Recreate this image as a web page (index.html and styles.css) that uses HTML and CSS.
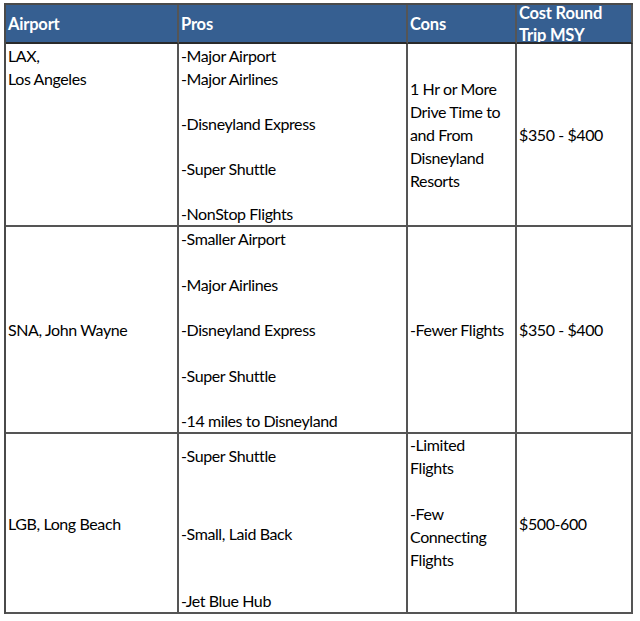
FILE: index.html
```html
<!DOCTYPE html>
<html>
<head>
<meta charset="utf-8">
<link rel="stylesheet" href="styles.css">
</head>
<body>
<div class="sheet">
  <div class="cell head">Airport</div>
  <div class="cell head">Pros</div>
  <div class="cell head">Cons</div>
  <div class="cell head"><span>Cost Round<br>Trip MSY</span></div>

  <div class="cell top"><div>LAX,</div><div>Los Angeles</div></div>
  <div class="cell top">
    <div>-Major Airport</div>
    <div>-Major Airlines</div>
    <div class="gap"></div>
    <div>-Disneyland Express</div>
    <div class="gap"></div>
    <div>-Super Shuttle</div>
    <div class="gap"></div>
    <div>-NonStop Flights</div>
  </div>
  <div class="cell mid"><div>1 Hr or More</div><div>Drive Time to</div><div>and From</div><div>Disneyland</div><div>Resorts</div></div>
  <div class="cell mid"><div>$350 - $400</div></div>

  <div class="cell mid"><div>SNA, John Wayne</div></div>
  <div class="cell top">
    <div>-Smaller Airport</div>
    <div class="gap"></div>
    <div>-Major Airlines</div>
    <div class="gap"></div>
    <div>-Disneyland Express</div>
    <div class="gap"></div>
    <div>-Super Shuttle</div>
    <div class="gap"></div>
    <div>-14 miles to Disneyland</div>
  </div>
  <div class="cell mid"><div>-Fewer Flights</div></div>
  <div class="cell mid"><div>$350 - $400</div></div>

  <div class="cell mid"><div>LGB, Long Beach</div></div>
  <div class="cell top lgb-pros">
    <div>-Super Shuttle</div>
    <div class="gap-lg"></div>
    <div>-Small, Laid Back</div>
    <div class="gap-md"></div>
    <div>-Jet Blue Hub</div>
  </div>
  <div class="cell top lgb-cons">
    <div>-Limited</div>
    <div>Flights</div>
    <div class="gap"></div>
    <div>-Few</div>
    <div>Connecting</div>
    <div>Flights</div>
  </div>
  <div class="cell mid"><div>$500-600</div></div>
</div>
</body>
</html>
```

FILE: styles.css
```css
html, body {
  margin: 0;
  padding: 0;
  background: #ffffff;
}

body {
  font-family: Lato, "Liberation Sans", sans-serif;
  font-size: 16px;
  line-height: 23px;
  letter-spacing: -0.4px;
  color: #000000;
}

.sheet {
  display: grid;
  grid-template-columns: 173px 229px 109px 116px;
  grid-template-rows: 39px 183px 207px 180px;
  width: max-content;
  margin: 3px 0 0 4px;
  border-left: 2px solid #4a4a4a;
  border-top: 2px solid #4a4a4a;
}

.cell {
  box-sizing: border-box;
  border-right: 2px solid #555555;
  border-bottom: 2px solid #555555;
  padding: 0 2px;
  display: flex;
  flex-direction: column;
  overflow: hidden;
  white-space: nowrap;
}

.head {
  background: #365f91;
  color: #ffffff;
  font-weight: 700;
  font-size: 16.5px;
  letter-spacing: -0.2px;
  justify-content: center;
  line-height: 22px;
  border-bottom-color: #2a2a2a;
}

.top {
  justify-content: flex-start;
}

.mid {
  justify-content: center;
}

.gap {
  height: 23px;
}

.lgb-pros {
  padding-top: 10px;
}

.gap-lg {
  height: 57px;
}

.gap-md {
  height: 45px;
}

.lgb-cons {
  margin-top: -1px;
}
```
